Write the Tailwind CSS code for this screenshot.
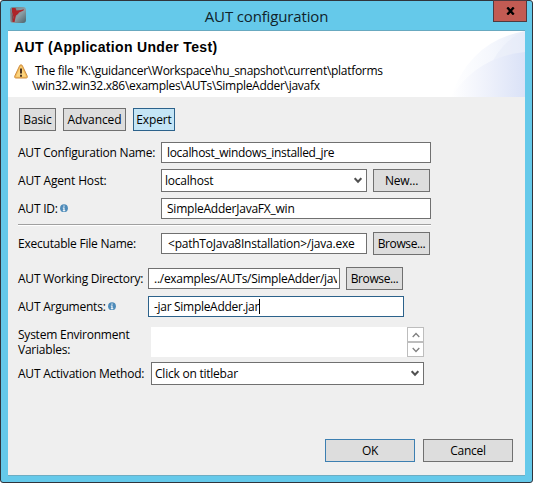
<!DOCTYPE html>
<html lang="en">
<head>
<meta charset="utf-8">
<title>AUT configuration</title>
<script src="https://cdn.jsdelivr.net/npm/@tailwindcss/browser@4"></script>
</head>
<body class="w-[533px] h-[483px] overflow-hidden bg-white font-['Open_Sans','Noto_Sans',sans-serif] text-[12px] leading-[15px] tracking-[-0.23px] text-black whitespace-nowrap">
<div class="w-[533px] h-[483px] rounded-[3px] border border-[#30343c] bg-[#65c9ea] flex flex-col relative">
  <header class="h-[29px] shrink-0 flex items-start justify-center relative">
    <svg class="absolute left-[9px] top-[6px]" width="16" height="16" viewBox="0 0 16 16">
      <defs><linearGradient id="g" x1="0" x2="1" y2="1"><stop stop-color="#69818b"/><stop offset=".55" stop-color="#8c9da4"/><stop offset="1" stop-color="#4b626b"/></linearGradient></defs>
      <rect width="16" height="16" rx="3" fill="url(#g)"/>
      <path d="M2 1H5.5L6.5 3.6 11 3 14 2.2 13.5 3.6 9 5.4 8 7 6 8.5 5.4 11 4.6 15H2.5L3.4 10 2 5z" fill="#ad2429"/>
      <path d="M1.6 5l1.8 5L2.5 15H1.6z" fill="#7d4a50"/>
    </svg>
    <h1 class="text-[15px] leading-[20px] tracking-[-0.15px] mt-[5px] text-[#10232b]">AUT configuration</h1>
    <button class="absolute right-[5px] top-[-1px] w-[34px] h-[22px] bg-[#c25b53] border border-[#4f3a40] flex items-center justify-center" aria-label="Close">
      <svg width="9" height="8" viewBox="0 0 9 8"><path d="M1.3 .4L7.7 7.6M7.7 .4L1.3 7.6" stroke="#000" stroke-width="2.3"/></svg>
    </button>
  </header>
  <main class="mx-[7px] h-[446px] border-t border-t-[#68a9c0] border-b border-b-[#6dadc3] bg-[#efefef] flex flex-col">
    <section class="h-[66px] shrink-0 bg-white relative overflow-hidden">
      <svg class="absolute right-0 top-0" width="80" height="66" viewBox="0 0 80 66">
        <defs>
          <linearGradient id="a" x1="0" x2="1"><stop stop-color="#fff"/><stop offset=".5" stop-color="#f6f8fd"/><stop offset="1" stop-color="#e8edf9"/></linearGradient>
          <linearGradient id="b" x1="0" x2="1"><stop stop-color="#fff"/><stop offset=".5" stop-color="#eef1fb"/><stop offset="1" stop-color="#dae2f7"/></linearGradient>
        </defs>
        <path d="M6 66Q25 10 80 0V66z" fill="url(#a)"/>
        <path d="M45 36Q57 9 80 0V66H40z" fill="#e4e9f8" fill-opacity=".4"/>
        <path d="M6 66Q32 26 80 21V66z" fill="url(#b)"/>
      </svg>
      <div class="relative pl-[6px] pt-[8px]">
        <h2 class="font-['Liberation_Sans',sans-serif] font-bold text-[14px] leading-[16px] tracking-[0.33px]">AUT (Application Under Test)</h2>
        <div class="flex mt-[8px] tracking-[-0.29px]">
          <svg class="mt-[1px] shrink-0" width="14" height="15" viewBox="0 0 14 15"><path d="M7 .8Q8 .8 8.5 2L13.2 12Q13.8 14 12.3 14H1.7Q.2 14 .8 12L5.5 2Q6 .8 7 .8z" fill="#f5bd5a" stroke="#ce8e43"/><path d="M7 2L2 12.8H12z" fill="#ffe29a" opacity=".6"/><path d="M7 4.5v5M7 10.8v2" stroke="#493422" stroke-width="2"/></svg>
          <p class="ml-[4px]"><span class="ml-[3px]">The file "K:\guidancer\Workspace\hu_snapshot\current\platforms</span><br>\win32.win32.x86\examples\AUTs\SimpleAdder\javafx</p>
        </div>
      </div>
    </section>
    <form class="pl-[10px] pt-[11px] flex flex-col">
      <nav class="flex gap-[7px] ml-[1px] h-[23px] tracking-[-0.1px]">
        <button type="button" class="w-[37px] border border-[#707070] bg-[#ddd]">Basic</button>
        <button type="button" class="w-[63px] border border-[#707070] bg-[#ddd]">Advanced</button>
        <button type="button" class="w-[42px] border border-[#2c628b] bg-[#c4e5f6]">Expert</button>
      </nav>
      <div class="flex items-center h-[21px] mt-[11px]"><label class="w-[143px]">AUT Configuration Name:</label><div class="w-[270px] h-full border border-[#707070] bg-white pl-[5px] leading-[20px] tracking-[-0.32px]">localhost_windows_installed_jre</div></div>
      <div class="flex items-center h-[23px] mt-[6px]"><label class="w-[143px] tracking-[-0.15px]">AUT Agent Host:</label><div class="w-[206px] h-full border border-[#707070] bg-white pl-[3px] pr-[4px] flex items-center justify-between">localhost<svg width="8" height="7" viewBox="0 0 8 7"><path d="M.7 1.2L4 4.7 7.3 1.2" fill="none" stroke="#505050" stroke-width="2"/></svg></div><button type="button" class="ml-[6px] w-[57px] h-full border border-[#707070] bg-[#ddd]">New...</button></div>
      <div class="flex items-center h-[21px] mt-[6px]"><label class="w-[143px] flex items-center">AUT ID:<svg class="ml-[2px]" width="8" height="9" viewBox="0 0 8 9"><circle cx="4" cy="4.2" r="3.9" fill="#4e8bb9"/><path d="M4 1.5v1.2M2.8 4H4v2.5M2.8 6.7h2.5" stroke="#fff" stroke-width="1.1" fill="none"/></svg></label><div class="w-[270px] h-full border border-[#707070] bg-white pl-[5px] leading-[20px]">SimpleAdderJavaFX_win</div></div>
      <div class="w-[413px] h-[2px] mt-[5px] bg-white border-t border-[#a0a0a0]"></div>
      <div class="flex items-center h-[23px] mt-[6px]"><label class="w-[143px]">Executable File Name:</label><div class="w-[206px] h-[21px] border border-[#707070] bg-white pl-[6px] leading-[20px]">&lt;pathToJava8Installation&gt;/java.exe</div><button type="button" class="ml-[6px] w-[57px] h-full border border-[#707070] bg-[#ddd] tracking-[-0.4px]">Browse...</button></div>
      <div class="flex items-center h-[23px] mt-[12px]"><label class="w-[130px]">AUT Working Directory:</label><div class="w-[192px] h-[21px] border border-[#707070] bg-white pl-[5px] pr-[2px] leading-[19px] tracking-[-0.27px]"><div class="overflow-hidden h-[19px]">../examples/AUTs/SimpleAdder/javafx</div></div><button type="button" class="ml-[6px] w-[57px] h-full border border-[#707070] bg-[#ddd] tracking-[-0.4px]">Browse...</button></div>
      <div class="flex items-center h-[21px] mt-[6px]"><label class="w-[130px] flex items-center">AUT Arguments:<svg class="ml-[2px]" width="8" height="9" viewBox="0 0 8 9"><circle cx="4" cy="4.2" r="3.9" fill="#4e8bb9"/><path d="M4 1.5v1.2M2.8 4H4v2.5M2.8 6.7h2.5" stroke="#fff" stroke-width="1.1" fill="none"/></svg></label><div class="w-[256px] h-full border border-[#2c628b] bg-white pl-[5px] flex items-center tracking-[-0.3px]">-jar SimpleAdder.jar<i class="w-px h-[15px] bg-black"></i></div></div>
      <div class="flex h-[30px] mt-[10px]"><label class="w-[133px]">System Environment<br>Variables:</label><div class="w-[273px] h-full bg-white flex justify-end"><div class="w-[17px] flex flex-col"><span class="h-[15px] border border-[#bdbdbd] flex items-center justify-center"><svg width="8" height="6" viewBox="0 0 8 6"><path d="M.7 5L4 1.5 7.3 5" fill="none" stroke="#808080" stroke-width="1.3"/></svg></span><span class="h-[15px] border border-[#bdbdbd] flex items-center justify-center"><svg width="8" height="6" viewBox="0 0 8 6"><path d="M.7 1L4 4.5 7.3 1" fill="none" stroke="#808080" stroke-width="1.3"/></svg></span></div></div></div>
      <div class="flex items-center h-[23px] mt-[5px]"><label class="w-[133px]">AUT Activation Method:</label><div class="w-[273px] h-full border border-[#707070] bg-white pl-[3px] pr-[4px] flex items-center justify-between">Click on titlebar<svg width="8" height="7" viewBox="0 0 8 7"><path d="M.7 1.2L4 4.7 7.3 1.2" fill="none" stroke="#505050" stroke-width="2"/></svg></div></div>
    </form>
    <footer class="mt-auto mb-[13px] mr-[12px] flex justify-end gap-[8px] h-[23px]"><button class="w-[90px] border border-[#3c7fb1] bg-[#ddd]">OK</button><button class="w-[90px] border border-[#707070] bg-[#ddd]">Cancel</button></footer>
  </main>
</div>
</body>
</html>
